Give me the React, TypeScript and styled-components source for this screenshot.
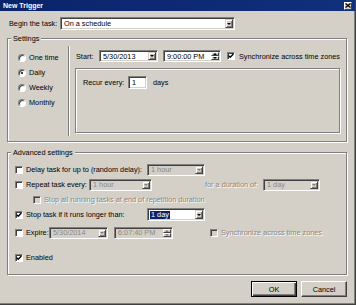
import React from "react";
import styled, { createGlobalStyle } from "styled-components";

const Global = createGlobalStyle`
  html, body { margin: 0; padding: 0; background: #d4d0c8; }
  body { font-family: "Liberation Sans", Arial, sans-serif; font-size: 7.3px; color: #000; }
  * { box-sizing: border-box; }
`;

const Window = styled.div`
  width: 356px;
  height: 305px;
  background: #d4d0c8;
  display: flex;
  flex-direction: column;
  border-right: 1px solid #404040;
  border-bottom: 1px solid #404040;
  box-shadow: inset -1px -1px 0 #808080;
`;

const TitleBar = styled.div`
  height: 11px;
  flex: none;
  display: flex;
  align-items: center;
  justify-content: space-between;
  padding: 0 3px 0 3px;
  background: linear-gradient(90deg, #0a246a, #10307c);
  color: #fff;
  font-weight: bold;
  font-size: 7px;
  line-height: 11px;
`;

const CloseButton = styled.div`
  width: 8px;
  height: 8px;
  background: #d4d0c8;
  border: 1px solid;
  border-color: #fff #404040 #404040 #fff;
  display: flex;
  align-items: center;
  justify-content: center;
`;

const Body = styled.div`
  display: flex;
  flex-direction: column;
  padding: 0 8px 0 7px;
`;

const BeginRow = styled.div`
  margin-top: 6px;
  height: 13px;
  display: flex;
  align-items: center;
  padding-left: 2px;
`;

const Label = styled.span<{ $w?: number; $disabled?: boolean; $ml?: number }>`
  display: inline-block;
  white-space: nowrap;
  ${(p) => (p.$w ? `width: ${p.$w}px; flex: none;` : "")}
  ${(p) => (p.$ml ? `margin-left: ${p.$ml}px;` : "")}
  color: ${(p) => (p.$disabled ? "#8a8780" : "#000")};
  ${(p) => (p.$disabled ? "text-shadow: 1px 1px 0 #fff;" : "")}
`;

const Field = styled.div<{ $w: number; $h?: number; $disabled?: boolean; $ml?: number }>`
  width: ${(p) => p.$w}px;
  height: ${(p) => p.$h ?? 12}px;
  flex: none;
  ${(p) => (p.$ml ? `margin-left: ${p.$ml}px;` : "")}
  display: flex;
  align-items: stretch;
  background: ${(p) => (p.$disabled ? "#d4d0c8" : "#fff")};
  border: 1px solid;
  border-color: #808080 #fff #fff #808080;
  box-shadow: inset 1px 1px 0 #404040, inset -1px -1px 0 #d4d0c8;
  padding: 1px;
`;

const FieldText = styled.span<{ $disabled?: boolean }>`
  flex: 1;
  display: flex;
  align-items: center;
  padding-left: 2px;
  white-space: nowrap;
  overflow: hidden;
  color: ${(p) => (p.$disabled ? "#8a8780" : "#000")};
`;

const Selected = styled.span`
  background: #0a246a;
  color: #fff;
  padding: 0 1px;
  line-height: 8px;
  margin-left: -1px;
`;

const DropButton = styled.div`
  width: 8px;
  flex: none;
  background: #d4d0c8;
  border: 1px solid;
  border-color: #d4d0c8 #404040 #404040 #d4d0c8;
  box-shadow: inset 1px 1px 0 #fff, inset -1px -1px 0 #808080;
  display: flex;
  align-items: center;
  justify-content: center;
`;

const Arrow = styled.span<{ $disabled?: boolean; $up?: boolean }>`
  width: 0;
  height: 0;
  border-left: 2px solid transparent;
  border-right: 2px solid transparent;
  ${(p) =>
    p.$up
      ? `border-bottom: 2px solid ${p.$disabled ? "#808080" : "#000"};`
      : `border-top: 2px solid ${p.$disabled ? "#808080" : "#000"};`}
`;

const Spinner = styled.div`
  width: 8px;
  flex: none;
  display: flex;
  flex-direction: column;
`;

const SpinHalf = styled.div`
  flex: 1;
  background: #d4d0c8;
  border: 1px solid;
  border-color: #fff #404040 #404040 #fff;
  display: flex;
  align-items: center;
  justify-content: center;
`;

const Group = styled.fieldset<{ $mt: number }>`
  margin: ${(p) => p.$mt}px 0 0 0;
  padding: 0;
  min-width: 0;
  border: 1px solid #808080;
  box-shadow: inset 1px 1px 0 #fff, 1px 1px 0 #fff;
`;

const Legend = styled.legend`
  padding: 0 2px;
  margin-left: 3px;
  line-height: 9px;
  background: #d4d0c8;
`;

const SettingsBody = styled.div`
  display: flex;
  align-items: stretch;
`;

const RadioColumn = styled.div`
  width: 60px;
  flex: none;
  padding: 7px 0 0 10px;
  display: flex;
  flex-direction: column;
`;

const RadioRow = styled.div`
  height: 15px;
  display: flex;
  align-items: center;
  gap: 3px;
`;

const Radio = styled.span<{ $checked?: boolean }>`
  width: 8px;
  height: 8px;
  flex: none;
  border-radius: 50%;
  background: #fff;
  border: 1px solid;
  border-color: #808080 #fff #fff #808080;
  box-shadow: inset 1px 1px 0 #404040;
  display: flex;
  align-items: center;
  justify-content: center;
  &::after {
    content: "";
    width: 2px;
    height: 2px;
    border-radius: 50%;
    background: ${(p) => (p.$checked ? "#000" : "transparent")};
  }
`;

const VSeparator = styled.div`
  width: 2px;
  flex: none;
  border-left: 1px solid #808080;
  border-right: 1px solid #fff;
  margin: 3px 0 5px 0;
`;

const RightPanel = styled.div`
  flex: 1;
  padding: 7px 10px 8px 5px;
  display: flex;
  flex-direction: column;
`;

const StartRow = styled.div`
  height: 12px;
  display: flex;
  align-items: center;
`;

const RecurBox = styled.div`
  margin-top: 6px;
  height: 65px;
  border: 1px solid #808080;
  box-shadow: inset 1px 1px 0 #fff, 1px 1px 0 #fff;
  padding: 7px 7px;
`;

const RecurRow = styled.div`
  height: 13px;
  display: flex;
  align-items: center;
`;

const AdvBody = styled.div`
  padding: 6px 0 10px 7px;
  display: flex;
  flex-direction: column;
`;

const Row = styled.div<{ $mt?: number; $indent?: number }>`
  height: 13px;
  margin-top: ${(p) => p.$mt ?? 0}px;
  padding-left: ${(p) => p.$indent ?? 0}px;
  display: flex;
  align-items: center;
`;

const Box = styled.span<{ $disabled?: boolean; $ml?: number }>`
  width: 8px;
  height: 8px;
  flex: none;
  ${(p) => (p.$ml ? `margin-left: ${p.$ml}px;` : "")}
  margin-right: 3px;
  background: ${(p) => (p.$disabled ? "#d4d0c8" : "#fff")};
  border: 1px solid;
  border-color: #808080 #fff #fff #808080;
  box-shadow: inset 1px 1px 0 #404040;
  display: flex;
  align-items: center;
  justify-content: center;
`;

const Footer = styled.div`
  margin-top: 6px;
  display: flex;
  justify-content: flex-end;
  gap: 4px;
`;

const Button = styled.div<{ $default?: boolean }>`
  width: 46px;
  height: 16px;
  display: flex;
  align-items: center;
  justify-content: center;
  background: #d4d0c8;
  border: 1px solid;
  border-color: ${(p) => (p.$default ? "#000" : "#fff #404040 #404040 #fff")};
  box-shadow: ${(p) =>
    p.$default
      ? "inset 1px 1px 0 #fff, inset -1px -1px 0 #404040, inset -2px -2px 0 #808080"
      : "inset -1px -1px 0 #808080"};
`;

const Check = ({ on }: { on?: boolean }) =>
  on ? (
    <svg width="6" height="6" viewBox="0 0 6 6">
      <path d="M0.6 2.6 L2.2 4.3 L5.4 1" fill="none" stroke="#000" strokeWidth="1.3" />
    </svg>
  ) : null;

const Combo = ({
  w,
  h,
  text,
  disabled,
  ml,
  selected,
}: {
  w: number;
  h?: number;
  text: string;
  disabled?: boolean;
  ml?: number;
  selected?: boolean;
}) => (
  <Field $w={w} $h={h} $disabled={disabled} $ml={ml}>
    <FieldText $disabled={disabled}>{selected ? <Selected>{text}</Selected> : text}</FieldText>
    <DropButton>
      <Arrow $disabled={disabled} />
    </DropButton>
  </Field>
);

const TimeField = ({ w, text, disabled, ml }: { w: number; text: string; disabled?: boolean; ml?: number }) => (
  <Field $w={w} $disabled={disabled} $ml={ml}>
    <FieldText $disabled={disabled}>{text}</FieldText>
    <Spinner>
      <SpinHalf>
        <Arrow $up $disabled={disabled} />
      </SpinHalf>
      <SpinHalf>
        <Arrow $disabled={disabled} />
      </SpinHalf>
    </Spinner>
  </Field>
);

export default function App() {
  return (
    <>
      <Global />
      <Window>
        <TitleBar>
          <span>New Trigger</span>
          <CloseButton>
            <svg width="6" height="5" viewBox="0 0 6 5">
              <path d="M0.5 0.5 L5.5 4.5 M5.5 0.5 L0.5 4.5" stroke="#000" strokeWidth="1.2" />
            </svg>
          </CloseButton>
        </TitleBar>
        <Body>
          <BeginRow>
            <Label $w={51}>Begin the task:</Label>
            <Combo w={175} h={13} text="On a schedule" />
          </BeginRow>

          <Group $mt={4}>
            <Legend>Settings</Legend>
            <SettingsBody>
              <RadioColumn>
                <RadioRow>
                  <Radio />
                  <span>One time</span>
                </RadioRow>
                <RadioRow>
                  <Radio $checked />
                  <span>Daily</span>
                </RadioRow>
                <RadioRow>
                  <Radio />
                  <span>Weekly</span>
                </RadioRow>
                <RadioRow>
                  <Radio />
                  <span>Monthly</span>
                </RadioRow>
              </RadioColumn>
              <VSeparator />
              <RightPanel>
                <StartRow>
                  <Label $w={23} $ml={1}>Start:</Label>
                  <Combo w={59} text="5/30/2013" />
                  <TimeField w={58} ml={5} text="9:00:00 PM" />
                  <Box $ml={6}>
                    <Check on />
                  </Box>
                  <Label $ml={1}>Synchronize across time zones</Label>
                </StartRow>
                <RecurBox>
                  <RecurRow>
                    <Label $w={45}>Recur every:</Label>
                    <Field $w={19} $h={13}>
                      <FieldText>1</FieldText>
                    </Field>
                    <Label $ml={6}>days</Label>
                  </RecurRow>
                </RecurBox>
              </RightPanel>
            </SettingsBody>
          </Group>

          <Group $mt={6}>
            <Legend>Advanced settings</Legend>
            <AdvBody>
              <Row>
                <Box />
                <Label $w={121}>Delay task for up to (random delay):</Label>
                <Combo w={58} text="1 hour" disabled />
              </Row>
              <Row $mt={2}>
                <Box />
                <Label $w={63}>Repeat task every:</Label>
                <Combo w={63} text="1 hour" disabled />
                <Label $w={58} $ml={53} $disabled>
                  for a duration of:
                </Label>
                <Combo w={57} text="1 day" disabled />
              </Row>
              <Row $mt={2} $indent={18}>
                <Box $disabled />
                <Label $disabled>Stop all running tasks at end of repetition duration</Label>
              </Row>
              <Row $mt={2}>
                <Box>
                  <Check on />
                </Box>
                <Label $w={121}>Stop task if it runs longer than:</Label>
                <Combo w={58} h={13} text="1 day" selected />
              </Row>
              <Row $mt={5}>
                <Box />
                <Label $w={23}>Expire:</Label>
                <Combo w={59} text="5/30/2014" disabled />
                <TimeField w={59} ml={6} text="6:07:40 PM" disabled />
                <Box $disabled $ml={37} />
                <Label $disabled>Synchronize across time zones</Label>
              </Row>
              <Row $mt={12}>
                <Box>
                  <Check on />
                </Box>
                <Label>Enabled</Label>
              </Row>
            </AdvBody>
          </Group>

          <Footer>
            <Button $default>OK</Button>
            <Button>Cancel</Button>
          </Footer>
        </Body>
      </Window>
    </>
  );
}
